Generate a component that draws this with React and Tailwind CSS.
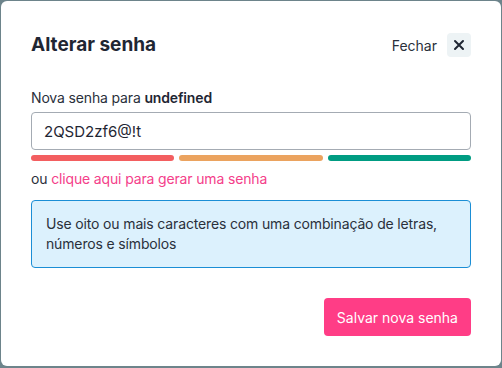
import React, { useState } from 'react';

const App = () => {
  const [password, setPassword] = useState('2QSD2zf6@!t');

  return (
    <div className="w-[502px] h-[368px] bg-[#6d848b] pt-px px-px pb-[2px] font-['Inter',sans-serif]">
      <div className="w-[500px] h-[365px] bg-white rounded-md px-[30px] pt-[30px] flex flex-col">
        <div className="flex items-center justify-between h-[28px]">
          <h2 className="text-[19px] font-bold text-[#1f2633] leading-7">Alterar senha</h2>
          <div className="flex items-center gap-[10px]">
            <span className="text-[14px] text-[#2a303b]">Fechar</span>
            <button className="w-6 h-6 rounded bg-[#edf3f5] flex items-center justify-center text-[#1f2633]">
              <svg width="12" height="12" viewBox="0 0 12 12" fill="none" stroke="currentColor" strokeWidth="2" strokeLinecap="round">
                <path d="M2 2l8 8M10 2l-8 8" />
              </svg>
            </button>
          </div>
        </div>

        <label className="mt-[29px] text-[14px] leading-5 text-[#2a303b] tracking-[-0.15px]">
          Nova senha para <span className="font-semibold text-[#1f2633]">undefined</span>
        </label>

        <input
          value={password}
          onChange={(e) => setPassword(e.target.value)}
          className="mt-[4px] h-[38px] w-full border border-[#a4abb3] rounded px-[12px] text-[15px] text-[#1f2633] outline-none"
        />

        <div className="mt-[5px] flex gap-[5px]">
          <div className="flex-1 h-[6px] rounded-full bg-[#f35e60]" />
          <div className="flex-1 h-[6px] rounded-full bg-[#eba35f]" />
          <div className="flex-1 h-[6px] rounded-full bg-[#009c82]" />
        </div>

        <p className="mt-[8px] text-[14px] leading-5 text-[#2a303b] tracking-[-0.15px]">
          ou <a className="text-[#f4408a] cursor-pointer">clique aqui para gerar uma senha</a>
        </p>

        <div className="mt-[11px] bg-[#dcf1fd] border border-[#1b8ed5] rounded px-[14px] py-[13px] text-[14px] leading-5 text-[#2a303b] tracking-[-0.15px]">
          Use oito ou mais caracteres com uma combinação de letras, números e símbolos
        </div>

        <div className="mt-[30px] flex justify-end">
          <button className="h-[38px] px-[13px] rounded bg-[#ff3d86] text-white text-[14px]">
            Salvar nova senha
          </button>
        </div>
      </div>
    </div>
  );
};

export default App;
